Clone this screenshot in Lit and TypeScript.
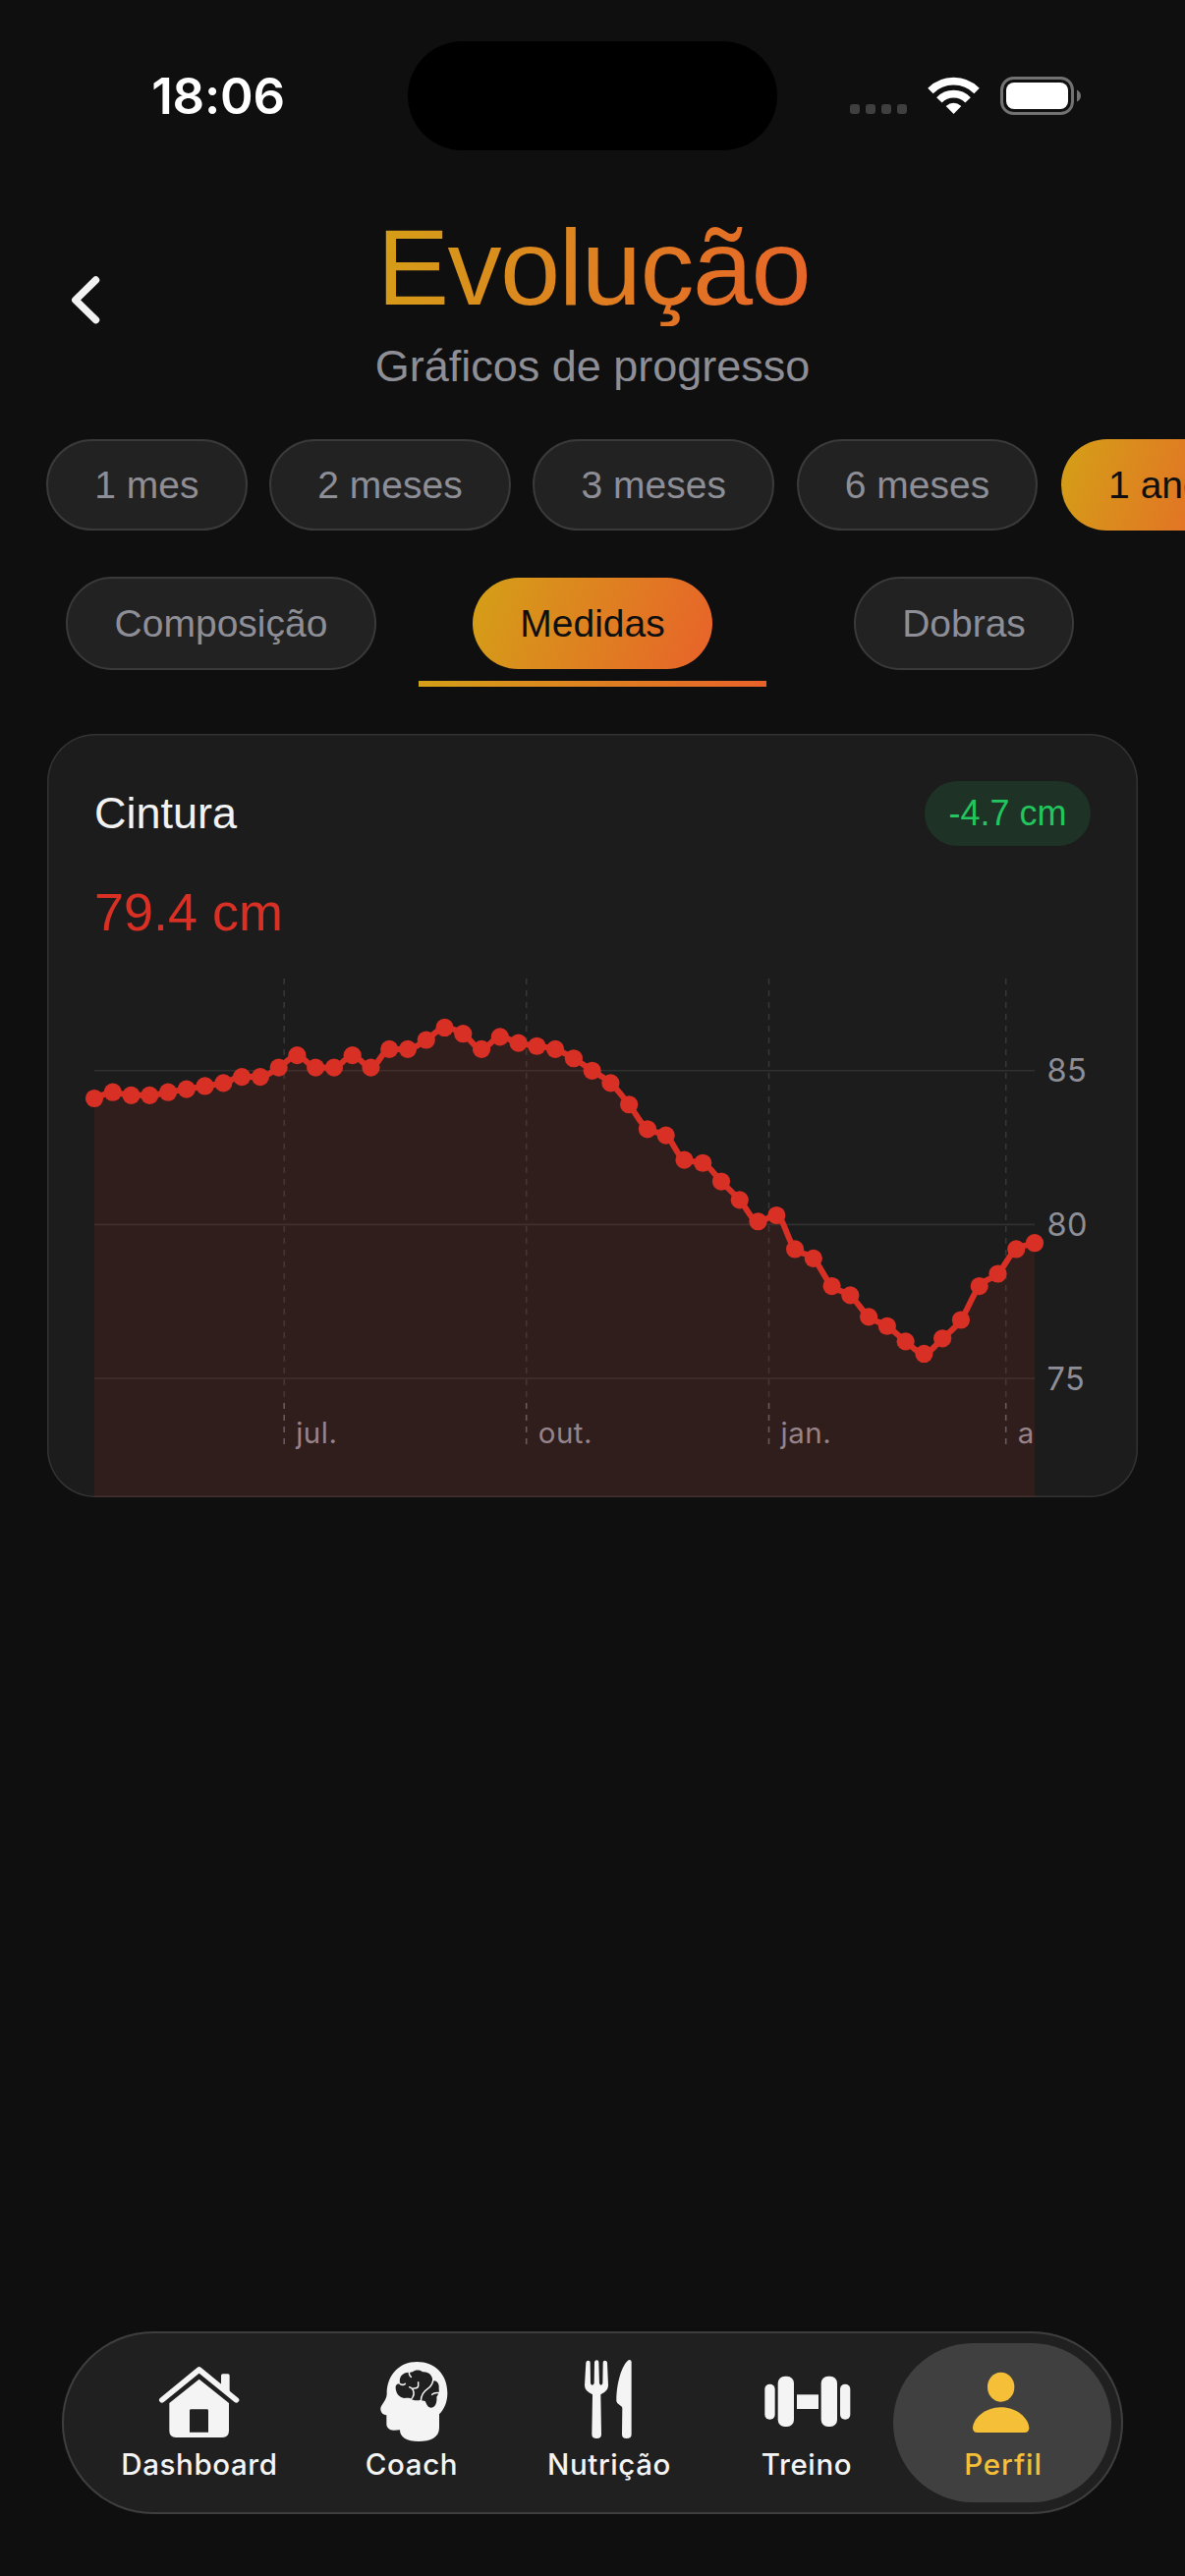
import { LitElement, html, svg, css } from "lit";
import { customElement, property } from "lit/decorators.js";
import { classMap } from "lit/directives/class-map.js";

const WAIST = [
  84.1, 84.3, 84.2, 84.2, 84.3, 84.4, 84.5, 84.6, 84.8, 84.8, 85.1, 85.5, 85.1, 85.1, 85.5, 85.1, 85.7, 85.7,
  86.0, 86.4, 86.2, 85.7, 86.1, 85.9, 85.8, 85.7, 85.4, 85.0, 84.6, 83.9, 83.1, 82.9, 82.1, 82.0, 81.4, 80.8,
  80.1, 80.3, 79.2, 78.9, 78.0, 77.7, 77.0, 76.7, 76.2, 75.8, 76.3, 76.9, 78.0, 78.4, 79.2, 79.4,
];

type Point = { x: number; y: number };

/** Monotone cubic path through evenly spaced points. */
function monotonePath(points: Point[]): string {
  const n = points.length;
  const slopes: number[] = [];
  for (let i = 0; i < n - 1; i++) {
    slopes.push((points[i + 1].y - points[i].y) / (points[i + 1].x - points[i].x));
  }
  const tangents = points.map((_, i) => {
    if (i === 0) return slopes[0];
    if (i === n - 1) return slopes[n - 2];
    const a = slopes[i - 1];
    const b = slopes[i];
    if (a * b <= 0) return 0;
    return Math.sign(a) * Math.min(Math.abs(a), Math.abs(b), 0.25 * Math.abs(a + b)) * 2;
  });
  let d = `M${points[0].x.toFixed(2)} ${points[0].y.toFixed(2)}`;
  for (let i = 0; i < n - 1; i++) {
    const p = points[i];
    const q = points[i + 1];
    const h = (q.x - p.x) / 3;
    d += `C${(p.x + h).toFixed(2)} ${(p.y + tangents[i] * h).toFixed(2)} ${(q.x - h).toFixed(2)} ${(
      q.y - tangents[i + 1] * h
    ).toFixed(2)} ${q.x.toFixed(2)} ${q.y.toFixed(2)}`;
  }
  return d;
}

@customElement("progress-chart")
class ProgressChart extends LitElement {
  @property({ attribute: false }) values: number[] = [];

  static styles = css`
    :host {
      display: block;
    }
    .plot {
      display: block;
      overflow: visible;
    }
    .grid {
      stroke: #303030;
      stroke-width: 1.6;
    }
    .dash {
      stroke: #363636;
      stroke-width: 1.6;
      stroke-dasharray: 6 6;
    }
    .tick {
      stroke: #5f5d62;
      stroke-width: 1.6;
      stroke-dasharray: 6 6;
    }
    .area {
      fill: #d93025;
      fill-opacity: 0.105;
    }
    .line {
      fill: none;
      stroke: #d93025;
      stroke-width: 6;
      stroke-linejoin: round;
    }
    .dot {
      fill: #d93025;
    }
    .axis {
      fill: #8e8e96;
      font-family: Inter, sans-serif;
      font-size: 32.5px;
      letter-spacing: 0.5px;
    }
    .month {
      fill: #8e8e96;
      font-family: Inter, sans-serif;
      font-size: 29.5px;
      letter-spacing: 0.5px;
    }
  `;

  render() {
    const width = 957;
    const bottom = 540;
    const yOf = (v: number) => 105.8 + (85 - v) * 31.32;
    const points = this.values.map((v, i) => ({ x: (i * width) / (this.values.length - 1), y: yOf(v) }));
    const line = monotonePath(points);
    const months = [
      { x: 193.2, label: "jul." },
      { x: 439.7, label: "out." },
      { x: 686.5, label: "jan." },
      { x: 927.7, label: "a" },
    ];
    return html`
      <svg class="plot" width="1014" height="540" viewBox="0 0 1014 540">
        ${[85, 80, 75].map(
          (v) => svg`
            <line class="grid" x1="0" x2=${width} y1=${yOf(v)} y2=${yOf(v)}></line>
            <text class="axis" x="969.5" y=${yOf(v) + 11.5}>${v}</text>`,
        )}
        ${months.map(
          (m) => svg`
            <line class="dash" x1=${m.x} x2=${m.x} y1="12" y2="444"></line>
            <line class="tick" x1=${m.x} x2=${m.x} y1="444" y2="486"></line>
            <text class="month" x=${m.x + 12} y="485">${m.label}</text>`,
        )}
        <path class="area" d="${line}L${width} ${bottom}L0 ${bottom}Z"></path>
        <path class="line" d=${line}></path>
        ${points.map((p) => svg`<circle class="dot" cx=${p.x} cy=${p.y} r="9.1"></circle>`)}
      </svg>
    `;
  }
}

const houseIcon = html`<svg class="icon" viewBox="345 132 288 288">
  <path d="M555 241V204q0-5 5-5h16q5 0 5 5v60z"></path>
  <path class="stroke" d="M374.5 278.5L488 186L601.500 278.500"></path>
  <path
    fill-rule="evenodd"
    d="M397 288L488 215L579 288V373Q579 393 559 393H417Q397 393 397 373ZM463 307Q459 307 459 311V377H516V311Q516 307 512 307Z"
  ></path>
</svg>`;

const headIcon = html`<svg class="icon" viewBox="3 -3 288 288">
  <path
    d="M163 27C218 27 256 66 256 122C256 150 246 172 231 187V228C231 258 205 270 168 270C132 270 111 258 111 235L92 236C78 236 70 228 70 216V190C58 189 51 180 52 168C54 157 70 145 71 125C71 66 110 27 163 27Z"
  ></path>
  <path
    class="cut"
    d="M98 106C97 98 104 94 111 90C108 74 119 61 133 60C139 58 144 60 150 58C156 51 174 51 180 58C198 56 211 68 211 86C224 81 232 96 230 108C232 120 228 128 223 134C225 146 221 166 207 167C195 167 192 154 188 147C184 146 178 145 172 144C162 146 152 144 145 141C141 136 134 138 124 138C109 137 98 122 98 106Z"
  ></path>
  <path class="fold" d="M98 92Q110 91 114 96Q121 99 127 94"></path>
  <path class="fold" d="M140 55Q137 66 145 73"></path>
  <path class="fold" d="M145 142Q158 128 151 113Q147 105 140 104M152 108Q166 109 167 101V89"></path>
  <path class="fold" d="M213 76Q213 98 196 109Q176 122 175 146"></path>
  <path class="fold" d="M209 127Q217 119 232 122"></path>
</svg>`;

const cutleryIcon = html`<svg class="icon" viewBox="396 132 288 288">
  <path
    d="M469 164Q470 158 476 158Q482 158 482 164L483 228Q488 238 494 228L495 163Q496 157 502 157Q508 157 508 163L510 228Q515 238 520 228L521 164Q521 158 527 158Q533 158 534 164L537 234Q537 251 514 262L516 383Q516 396 502 396Q487 396 487 383L489 262Q465 251 465 234Z"
  ></path>
  <path
    d="M608 162Q608 156 601 156C585 162 562 215 562 282Q563 290 572 294Q580 298 580 303L579 383Q579 396 593 396Q608 396 608 383Z"
  ></path>
</svg>`;

const dumbbellIcon = html`<svg class="icon" viewBox="999 132 288 288">
  <rect x="1015" y="230" width="31" height="108" rx="15"></rect>
  <rect x="1055" y="206" width="49" height="154" rx="21"></rect>
  <rect x="1113" y="262" width="66" height="44"></rect>
  <rect x="1187" y="206" width="49" height="154" rx="21"></rect>
  <rect x="1245" y="230" width="31" height="108" rx="15"></rect>
</svg>`;

const personIcon = html`<svg class="icon" viewBox="516 132 288 288">
  <ellipse cx="656" cy="239" rx="41" ry="45"></ellipse>
  <path d="M570 364C572 332 610 301 656 301C702 301 740 332 742 364Q742 378 728 378H584Q570 378 570 364Z"></path>
</svg>`;

@customElement("app-root")
class AppRoot extends LitElement {
  static styles = css`
    :host {
      display: block;
      width: 1206px;
      height: 2622px;
      overflow: hidden;
      background: #0f0f0f;
      color: #f2f2f2;
      font-family: "Liberation Sans", Arial, sans-serif;
      --brand: linear-gradient(110deg, #d4a017 0%, #e8622a 100%);
    }
    .screen {
      display: flex;
      flex-direction: column;
      height: 100%;
    }
    .status {
      display: grid;
      grid-template-columns: 415px 376px 415px;
      padding-top: 42px;
      height: 111px;
    }
    .time {
      display: flex;
      align-items: center;
      justify-content: center;
      padding-left: 29px;
      color: #fff;
      font: 600 51px Inter, sans-serif;
      letter-spacing: -0.2px;
    }
    .island {
      border-radius: 56px;
      background: #000;
    }
    .signals {
      display: block;
    }
    .header {
      display: grid;
      grid-template-columns: 174px 1fr 174px;
      align-items: center;
      margin-top: 58px;
    }
    .back {
      display: block;
      margin-left: 66px;
    }
    .titles {
      display: flex;
      flex-direction: column;
      align-items: center;
      gap: 14px;
      padding-top: 1px;
      margin-bottom: -1px;
    }
    .title {
      margin: 0;
      padding-left: 2px;
      font-size: 110px;
      font-weight: 400;
      line-height: 120px;
      letter-spacing: -1.5px;
      background: var(--brand);
      -webkit-background-clip: text;
      background-clip: text;
      color: transparent;
    }
    .subtitle {
      margin: 0;
      font-size: 45px;
      line-height: 54px;
      color: #8e8e96;
    }
    .periods {
      display: flex;
      gap: 24.5px;
      height: 93px;
      margin-top: 48px;
      padding-left: 48px;
      overflow: hidden;
    }
    .chip {
      flex: none;
      box-sizing: border-box;
      height: 95px;
      margin: -1px;
      padding: 0 47.2px;
      border: 2px solid #3a3a3a;
      border-radius: 48px;
      background: #222;
      color: #8e8e96;
      font: 39px / 91px "Liberation Sans", Arial, sans-serif;
      white-space: nowrap;
    }
    .periods .chip:not(.on) {
      height: 93px;
      margin: 0 -1px;
      line-height: 89px;
    }
    .chip.on {
      height: 93px;
      margin: 0;
      padding: 0 48.2px;
      border: none;
      background: var(--brand);
      color: #0f0f0f;
      line-height: 93px;
    }
    .tabs {
      display: grid;
      grid-template-columns: repeat(3, 354px);
      gap: 24px;
      margin: 48px 48px 0;
    }
    .tab {
      display: flex;
      flex-direction: column;
      align-items: center;
      height: 111px;
      justify-content: space-between;
    }
    .underline {
      width: 100%;
      height: 6px;
      background: linear-gradient(90deg, #d4a017, #e8622a);
    }
    .card {
      box-sizing: border-box;
      height: 777px;
      margin: 48px 48px 0;
      padding: 48px 48px 0;
      border-radius: 49px;
      background: #1c1c1c;
      box-shadow: inset 0 0 0 1.5px #333;
      overflow: hidden;
    }
    .card-head {
      display: flex;
      align-items: center;
      justify-content: space-between;
      height: 66px;
    }
    .name {
      margin: 0;
      font-size: 45px;
      font-weight: 400;
      line-height: 54px;
    }
    .delta {
      padding: 0 24.5px;
      border-radius: 33px;
      background: #1e3226;
      color: #22c55e;
      font-size: 36px;
      line-height: 65px;
      height: 66px;
    }
    .value {
      margin: 34px 0 23px;
      color: #d93025;
      font-size: 54px;
      line-height: 66px;
    }
    .nav {
      box-sizing: border-box;
      display: grid;
      grid-template-columns: 256px 176px 226px 176px 222px;
      height: 186px;
      margin: auto 63px 63px;
      padding: 12px;
      border-radius: 93px;
      background: #202020;
      box-shadow: inset 0 0 0 2px #3e3e3e;
    }
    .item {
      display: flex;
      flex-direction: column;
      align-items: center;
      padding-top: 9px;
      border-radius: 81px;
      color: #f4f4f4;
      font: 500 29.5px / 36px Inter, sans-serif;
      letter-spacing: 0.6px;
    }
    .item.on {
      background: #404040;
      color: #f5c037;
    }
    .item.on .label {
      padding-left: 2px;
      letter-spacing: 0.9px;
    }
    .icon {
      width: 96px;
      height: 96px;
      fill: currentColor;
      overflow: visible;
    }
    .stroke {
      fill: none;
      stroke: currentColor;
      stroke-width: 17;
      stroke-linecap: round;
      stroke-linejoin: round;
    }
    .cut {
      fill: #202020;
    }
    .fold {
      fill: none;
      stroke: currentColor;
      stroke-width: 4.5;
      stroke-linecap: round;
    }
  `;

  private periods = ["1 mes", "2 meses", "3 meses", "6 meses", "1 ano"];
  private tabs = ["Composição", "Medidas", "Dobras"];
  private nav = [
    { label: "Dashboard", icon: houseIcon },
    { label: "Coach", icon: headIcon },
    { label: "Nutrição", icon: cutleryIcon },
    { label: "Treino", icon: dumbbellIcon },
    { label: "Perfil", icon: personIcon },
  ];

  private renderStatus() {
    return html`<div class="status">
      <div class="time">18:06</div>
      <div class="island"></div>
      <svg class="signals" width="415" height="111" viewBox="791 42 415 111">
        <g fill="#3f3f3f">
          ${[865, 881, 897, 913].map((x) => svg`<rect x=${x} y="106" width="10" height="10" rx="3"></rect>`)}
        </g>
        <g transform="translate(850 60) scale(0.33333)" fill="none" stroke="#fff" stroke-width="23">
          <path d="M290.800 97.300A100 100 0 0 1 432.200 97.300"></path>
          <path d="M317.700 125.500A61 61 0 0 1 405.300 125.500"></path>
          <path d="M361.500 168L338 144Q361.500 124 385 144Z" fill="#fff" stroke="none"></path>
        </g>
        <rect x="1019.500" y="79.500" width="72" height="36" rx="12" fill="none" stroke="#727272" stroke-width="3"></rect>
        <rect x="1024" y="84" width="63" height="27" rx="8" fill="#fff"></rect>
        <path d="M1096 91.500Q1100 93.500 1100 97.500Q1100 101.500 1096 103.500Z" fill="#727272"></path>
      </svg>
    </div>`;
  }

  render() {
    return html`<div class="screen">
      ${this.renderStatus()}
      <header class="header">
        <svg class="back" width="44" height="60" viewBox="66 275 44 60">
          <path
            d="M97.500 285L76.800 305.300L97.500 325.600"
            fill="none"
            stroke="#f2f2f2"
            stroke-width="7.400"
            stroke-linecap="round"
            stroke-linejoin="round"
          ></path>
        </svg>
        <div class="titles">
          <h1 class="title">Evolução</h1>
          <p class="subtitle">Gráficos de progresso</p>
        </div>
      </header>
      <div class="periods">
        ${this.periods.map((p) => html`<button class=${classMap({ chip: true, on: p === "1 ano" })}>${p}</button>`)}
      </div>
      <div class="tabs">
        ${this.tabs.map((t) => {
          const on = t === "Medidas";
          return html`<div class="tab">
            <button class=${classMap({ chip: true, on })}>${t}</button>
            ${on ? html`<div class="underline"></div>` : null}
          </div>`;
        })}
      </div>
      <section class="card">
        <div class="card-head">
          <h2 class="name">Cintura</h2>
          <span class="delta">-4.7 cm</span>
        </div>
        <div class="value">79.4 cm</div>
        <progress-chart .values=${WAIST}></progress-chart>
      </section>
      <nav class="nav">
        ${this.nav.map(
          (n) => html`<div class=${classMap({ item: true, on: n.label === "Perfil" })}>
            ${n.icon}<span class="label">${n.label}</span>
          </div>`,
        )}
      </nav>
    </div>`;
  }
}
